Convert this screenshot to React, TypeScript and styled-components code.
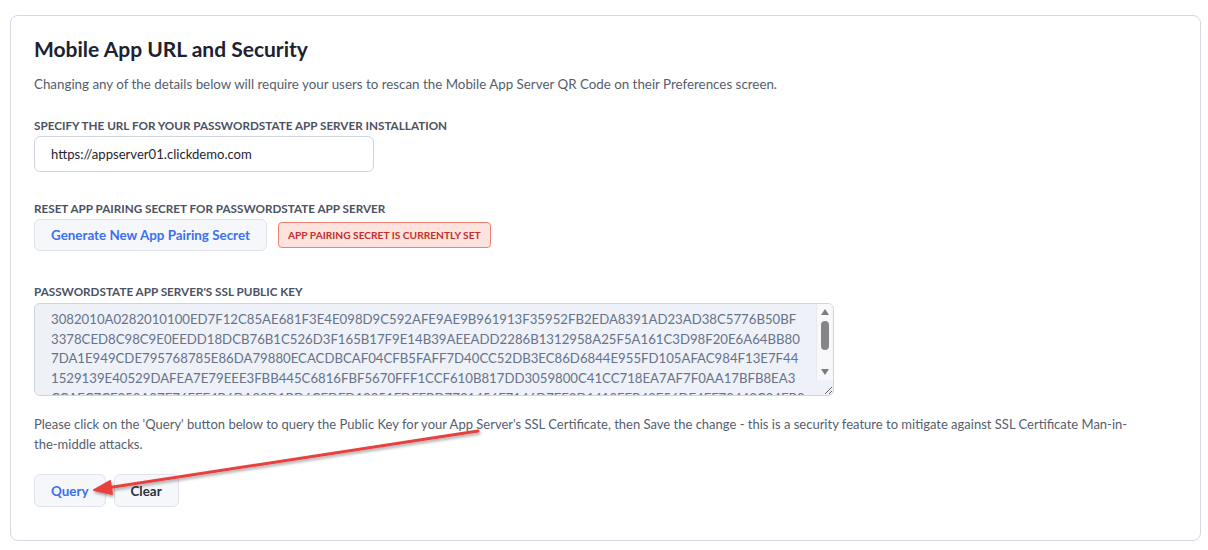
import styled, { createGlobalStyle } from 'styled-components';

const GlobalStyle = createGlobalStyle`
  html, body {
    margin: 0;
    padding: 0;
    background: #ffffff;
  }
  body {
    font-family: Lato, 'Noto Sans', sans-serif;
    color: #1f2533;
  }
`;

const keyLines = [
  '3082010A0282010100ED7F12C85AE681F3E4E098D9C592AFE9AE9B961913F35952FB2EDA8391AD23AD38C5776B50BF',
  '3378CED8C98C9E0EEDD18DCB76B1C526D3F165B17F9E14B39AEEADD2286B1312958A25F5A161C3D98F20E6A64BB80',
  '7DA1E949CDE795768785E86DA79880ECACDBCAF04CFB5FAFF7D40CC52DB3EC86D6844E955FD105AFAC984F13E7F44',
  '1529139E40529DAFEA7E79EEE3FBB445C6816FBF5670FFF1CCF610B817DD3059800C41CC718EA7AF7F0AA17BFB8EA3',
  'CCAFC7CF250A07E76FFF4B6DA09D1BD6CFDFD12051FDFFBD7731456F7146D7FF2D1419FFB49F56DF4FF70443C04FB0',
  '2A9B41C0E7F3D5A6B8C91E2F4A7D3B6C5E8F1A2B3C4D5E6F708192A3B4C5D6E7F8091A2B3C4D5E6F7080203010001',
];

const App = () => {
  return (
    <Page>
      <GlobalStyle />
      <Card>
        <Title>Mobile App URL and Security</Title>
        <Description>
          Changing any of the details below will require your users to rescan the Mobile App Server QR Code on their
          Preferences screen.
        </Description>

        <FieldLabel $gap={23}>Specify the URL for your Passwordstate App Server installation</FieldLabel>
        <UrlInput defaultValue="https://appserver01.clickdemo.com" />

        <FieldLabel $gap={28}>Reset App Pairing Secret for Passwordstate App Server</FieldLabel>
        <ActionRow>
          <ActionButton $tone="blue" $height={32}>Generate New App Pairing Secret</ActionButton>
          <StatusBadge>App Pairing Secret is currently set</StatusBadge>
        </ActionRow>

        <FieldLabel $gap={32}>Passwordstate App Server's SSL Public Key</FieldLabel>
        <KeyWrap>
          <KeyBox readOnly defaultValue={keyLines.join('\n')} />
          {/* the window's scrollbar, drawn since the headless page hides native ones */}
          <ScrollTrack>
            <ScrollArrow $dir="up" />
            <ScrollThumb />
            <ScrollArrow $dir="down" />
          </ScrollTrack>
        </KeyWrap>

        <HelpText>
          Please click on the 'Query' button below to query the Public Key for your App Server's SSL Certificate, then
          Save the change - this is a security feature to mitigate against SSL Certificate Man-in-the-middle attacks.
        </HelpText>

        <ButtonRow>
          <ActionButton $tone="blue" $height={33}>Query</ActionButton>
          <ActionButton $tone="dark" $height={33}>Clear</ActionButton>
        </ButtonRow>
      </Card>

      {/* annotation arrow drawn over the screenshot */}
      <Annotation width="1208" height="550" viewBox="0 0 1208 550">
        <defs>
          <filter id="arrowShadow" x="-10%" y="-50%" width="120%" height="200%">
            <feDropShadow dx="1" dy="2" stdDeviation="1.5" floodColor="#000" floodOpacity="0.35" />
          </filter>
        </defs>
        <g filter="url(#arrowShadow)" stroke="#e8413c" strokeLinecap="round" strokeLinejoin="round">
          <line x1="478" y1="431" x2="100" y2="489" strokeWidth="3" />
          <polygon points="94,490 110,481 112,494" fill="#e8413c" strokeWidth="2" />
        </g>
      </Annotation>
    </Page>
  );
};

const Page = styled.div`
  position: relative;
  width: 1208px;
  height: 550px;
  padding: 15px 7px 0 10px;
  box-sizing: border-box;
`;

const Card = styled.section`
  display: flex;
  flex-direction: column;
  align-items: flex-start;
  width: 1191px;
  box-sizing: border-box;
  padding: 19px 23px 33px 23px;
  border: 1px solid #d3d8e3;
  border-radius: 8px;
  background: #ffffff;
`;

const Title = styled.h2`
  margin: 0;
  font-size: 21px;
  line-height: 27px;
  font-weight: 700;
  color: #1c2230;
`;

const Description = styled.p`
  margin: 12px 0 0 0;
  font-size: 13.35px;
  line-height: 20px;
  color: #555e6e;
`;

const FieldLabel = styled.div<{ $gap: number }>`
  margin-top: ${(p) => p.$gap}px;
  font-size: 11.7px;
  line-height: 16px;
  font-weight: 700;
  text-transform: uppercase;
  color: #4b5263;
`;

const UrlInput = styled.input`
  margin-top: 3px;
  width: 340px;
  height: 36px;
  box-sizing: border-box;
  padding: 0 16px;
  border: 1px solid #cfd4df;
  border-radius: 6px;
  font-family: inherit;
  font-size: 13.1px;
  color: #1f2533;
  background: #ffffff;
  outline: none;
`;

const ActionRow = styled.div`
  display: flex;
  align-items: center;
  gap: 11px;
  margin-top: 3px;
`;

const ButtonRow = styled.div`
  display: flex;
  align-items: center;
  gap: 8px;
  margin-top: 20px;
`;

const ActionButton = styled.button<{ $tone: 'blue' | 'dark'; $height: number }>`
  height: ${(p) => p.$height}px;
  padding: 0 16px;
  border: 1px solid #dfe3eb;
  border-radius: 6px;
  background: #f5f7fb;
  font-family: inherit;
  font-size: 13.4px;
  font-weight: 700;
  color: ${(p) => (p.$tone === 'blue' ? '#3c70f0' : '#2a303c')};
  cursor: pointer;
`;

const StatusBadge = styled.span`
  display: inline-flex;
  align-items: center;
  height: 26px;
  box-sizing: border-box;
  padding: 0 9px;
  border: 1px solid #f0806f;
  border-radius: 4px;
  background: #fde3de;
  font-size: 10.2px;
  font-weight: 700;
  text-transform: uppercase;
  color: #c4302a;
`;

const KeyWrap = styled.div`
  position: relative;
  margin-top: 4px;
  width: 800px;
  height: 93px;
`;

const KeyBox = styled.textarea`
  display: block;
  width: 100%;
  height: 100%;
  box-sizing: border-box;
  padding: 6px 16px 0 16px;
  border: 1px solid #cfd5e0;
  border-radius: 6px;
  background: #eef1f7;
  font-family: inherit;
  font-size: 13.2px;
  line-height: 19.7px;
  color: #66738a;
  white-space: pre;
  overflow: hidden;
  resize: both;
  outline: none;
`;

const ScrollTrack = styled.div`
  position: absolute;
  top: 1px;
  right: 1px;
  bottom: 16px;
  width: 16px;
  display: flex;
  flex-direction: column;
  align-items: center;
  background: #f8f8fa;
  border-left: 1px solid #e8eaef;
  border-top-right-radius: 5px;
`;

const ScrollArrow = styled.div<{ $dir: 'up' | 'down' }>`
  width: 0;
  height: 0;
  margin: ${(p) => (p.$dir === 'up' ? '5px 0 0 0' : 'auto 0 5px 0')};
  border-left: 4.5px solid transparent;
  border-right: 4.5px solid transparent;
  ${(p) =>
    p.$dir === 'up' ? 'border-bottom: 6px solid #7c7c7c;' : 'border-top: 6px solid #7c7c7c;'}
`;

const ScrollThumb = styled.div`
  margin-top: 6px;
  width: 8px;
  height: 29px;
  border-radius: 4px;
  background: #858585;
`;

const HelpText = styled.p`
  margin: 18px 0 0 0;
  max-width: 1106px;
  font-size: 13px;
  line-height: 20px;
  color: #555e6e;
`;

const Annotation = styled.svg`
  position: absolute;
  left: 0;
  top: 0;
  pointer-events: none;
`;

export default App;
